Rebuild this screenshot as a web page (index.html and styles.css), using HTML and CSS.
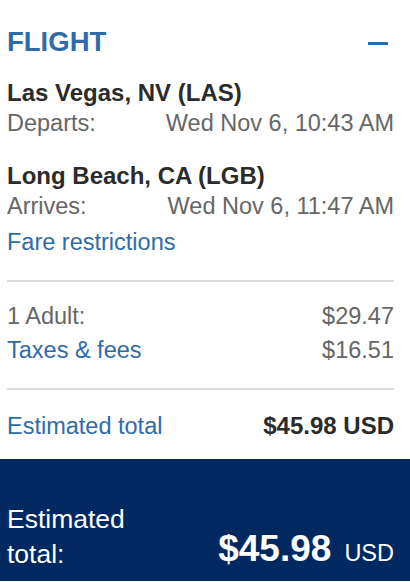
FILE: index.html
```html
<!DOCTYPE html>
<html lang="en">
<head>
<meta charset="utf-8">
<title>Flight summary</title>
<link rel="stylesheet" href="styles.css">
</head>
<body>
<div class="panel">
  <div class="header">
    <h2 class="title">FLIGHT</h2>
    <span class="collapse" aria-label="Collapse"></span>
  </div>

  <div class="leg leg-first">
    <div class="city">Las Vegas, NV (LAS)</div>
    <div class="row"><span class="muted">Departs:</span><span class="muted">Wed Nov 6, 10:43 AM</span></div>
  </div>

  <div class="leg leg-second">
    <div class="city">Long Beach, CA (LGB)</div>
    <div class="row"><span class="muted">Arrives:</span><span class="muted">Wed Nov 6, 11:47 AM</span></div>
  </div>

  <a class="link fare" href="#">Fare restrictions</a>

  <hr class="divider divider-first">

  <div class="row price-row adult"><span class="muted">1 Adult:</span><span class="muted">$29.47</span></div>
  <div class="row price-row taxes"><a class="link" href="#">Taxes &amp; fees</a><span class="muted">$16.51</span></div>

  <hr class="divider divider-second">

  <div class="row total-row"><a class="link" href="#">Estimated total</a><span class="total-value">$45.98 USD</span></div>
</div>

<div class="footer">
  <div class="footer-label">Estimated<br>total:</div>
  <div class="footer-price"><span class="footer-amount">$45.98</span><span class="footer-currency">USD</span></div>
</div>
</body>
</html>
```

FILE: styles.css
```css
html, body {
  margin: 0;
  padding: 0;
  background: #ffffff;
}

body {
  font-family: "Liberation Sans", Arial, Helvetica, sans-serif;
  font-size: 23.5px;
  line-height: 30px;
  color: #333333;
}

.panel {
  padding: 26px 16px 0 7px;
}

.header {
  display: flex;
  justify-content: space-between;
  align-items: center;
  height: 32px;
}

.title {
  margin: 0;
  font-size: 27.5px;
  line-height: 32px;
  font-weight: bold;
  color: #2e6ba8;
}

.collapse {
  display: block;
  width: 20px;
  height: 3px;
  margin-top: 2px;
  margin-right: 6px;
  background: #2e6ba8;
}

.leg-first {
  margin-top: 20px;
}

.leg-second {
  margin-top: 23px;
}

.city {
  font-size: 24px;
  font-weight: bold;
  color: #2b2b2b;
}

.row {
  display: flex;
  justify-content: space-between;
  align-items: baseline;
}

.muted {
  color: #666666;
}

.link {
  color: #2e6ba8;
  text-decoration: none;
}

.fare {
  display: block;
  margin-top: 6px;
}

.divider {
  border: 0;
  height: 2px;
  background: #dddddd;
  margin: 0;
}

.divider-first {
  margin-top: 23px;
}

.adult {
  margin-top: 19px;
}

.taxes {
  margin-top: 4px;
}

.divider-second {
  margin-top: 23px;
}

.total-row {
  margin-top: 21px;
}

.total-value {
  font-size: 24px;
  font-weight: bold;
  color: #2b2b2b;
}

.footer {
  margin-top: 18px;
  background: #002961;
  color: #ffffff;
  padding: 43px 16px 9px 7px;
  display: flex;
  justify-content: space-between;
  align-items: flex-end;
}

.footer-label {
  font-size: 26.5px;
  line-height: 35px;
  height: 70px;
}

.footer-price {
  margin-bottom: -1px;
  white-space: nowrap;
  line-height: 40px;
}

.footer-amount {
  font-size: 37px;
  font-weight: bold;
}

.footer-currency {
  margin-left: 13px;
  font-size: 23.5px;
}
```
